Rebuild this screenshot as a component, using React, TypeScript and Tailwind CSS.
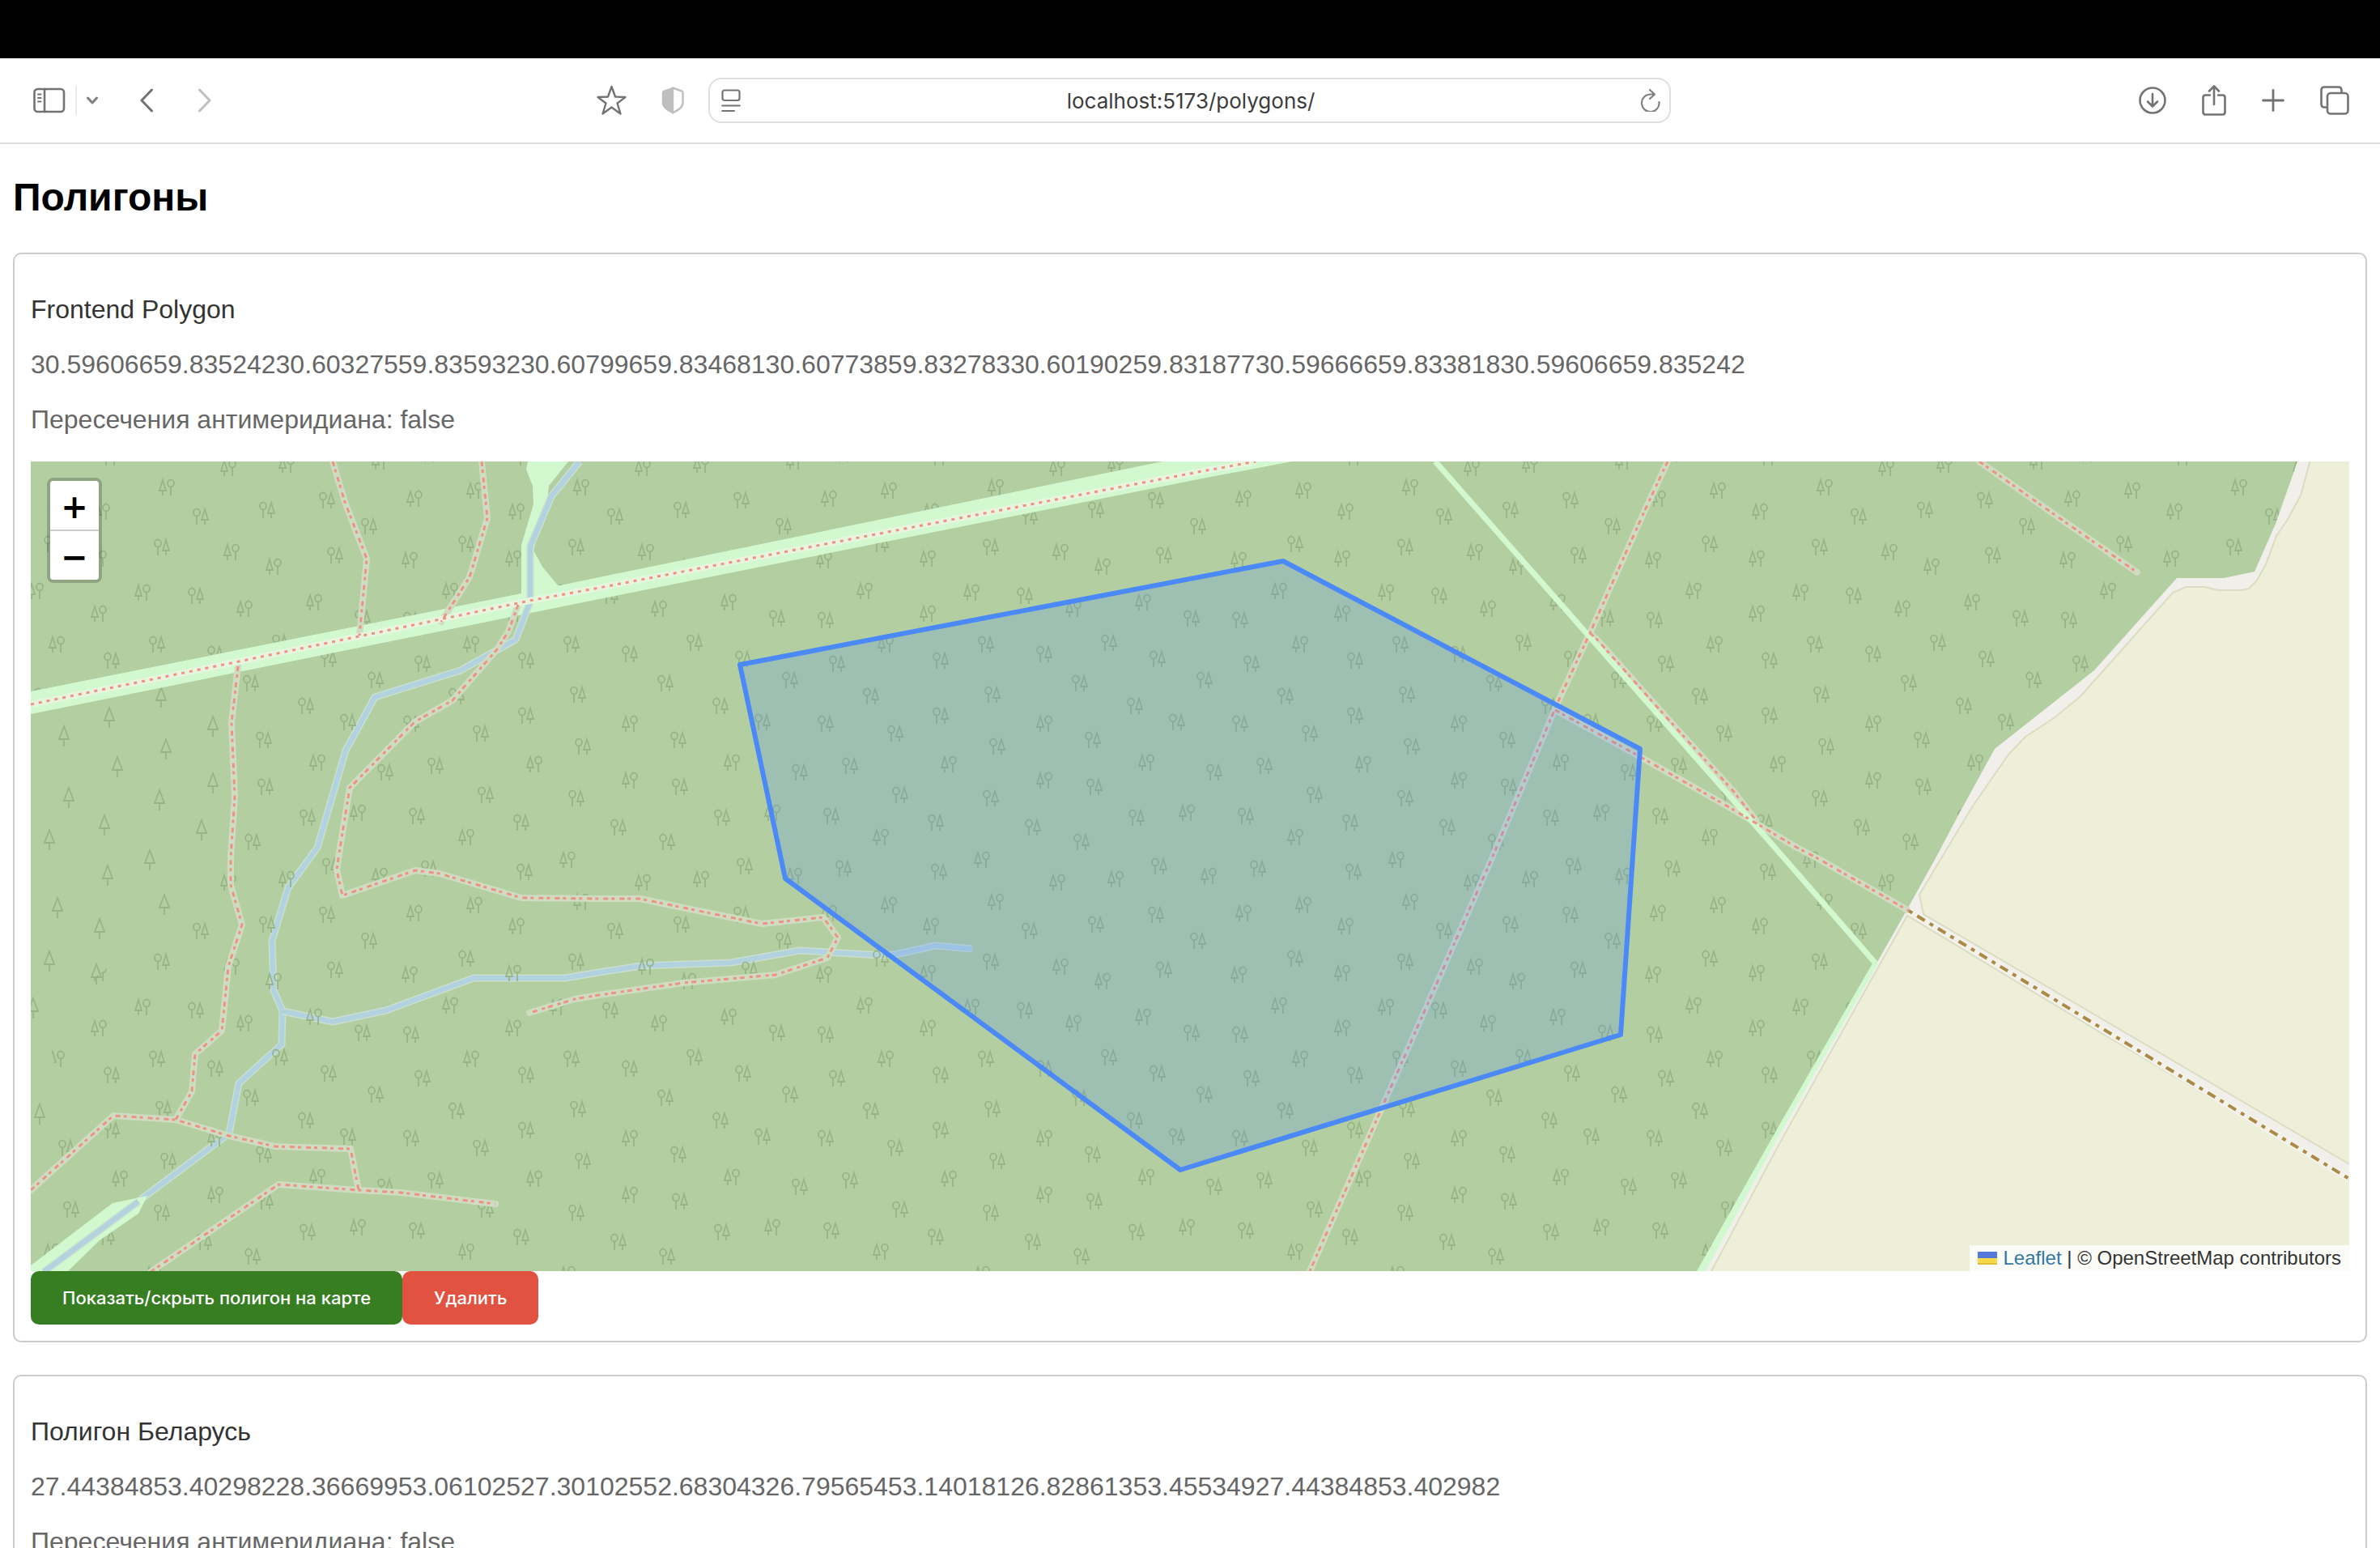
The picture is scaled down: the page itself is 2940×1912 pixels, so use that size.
import React from "react";

type Tree = [kind: "a" | "b", x: number, y: number];

const FOREST = "#b3cfa2";
const MEADOW = "#d1f8cf";
const TREE = "#98b587";

/* One 512-pixel tile of the mixed forest fill. */
const trees: Tree[] = [
  ["b", 54, 8], ["b", 126, 4], ["b", 241, 0], ["a", 302, 503], ["a", 420, 507],
  ["a", 20, 68], ["a", 102, 60], ["a", 176, 48], ["b", 284, 46], ["b", 358, 36],
  ["b", 490, 32], ["b", 410, 62], ["a", 228, 80], ["a", 348, 102], ["b", 58, 112],
  ["a", 484, 106], ["b", 110, 130], ["a", 186, 116], ["b", 278, 122], ["b", 406, 120],
  ["b", 460, 162], ["a", 14, 166], ["b", 74, 182], ["b", 160, 174], ["a", 220, 194],
  ["b", 328, 160], ["a", 280, 196], ["b", 406, 188], ["b", 354, 226], ["a", 118, 224],
  ["a", 38, 238], ["a", 478, 226], ["a", 178, 244], ["a", 294, 250], ["a", 422, 246],
  ["a", 82, 274], ["a", 236, 270], ["a", 336, 290], ["a", 486, 288], ["a", 150, 302],
  ["a", 202, 322], ["a", 280, 324], ["a", 422, 314], ["b", 38, 324], ["a", 366, 336],
  ["a", 98, 344], ["a", 492, 352], ["b", 164, 372], ["a", 248, 384], ["a", 310, 376],
  ["b", 432, 374], ["b", 38, 394], ["a", 100, 402], ["a", 372, 412], ["a", 484, 416],
  ["a", 152, 440], ["b", 214, 434], ["a", 287, 438], ["a", 416, 446], ["a", 24, 452],
  ["a", 84, 470], ["b", 348, 464], ["b", 473, 492], ["a", 180, 500],
];

const wrapped: Tree[] = trees.flatMap(([k, x, y]) => {
  const ys = y < 12 ? [y, y + 512] : y > 500 ? [y, y - 512] : [y];
  const xs = x < 12 ? [x, x + 512] : x > 500 ? [x, x - 512] : [x];
  return xs.flatMap((px) => ys.map((py): Tree => [k, px, py]));
});

const conifers: [number, number][] = [
  [199, 861], [135, 886], [79, 909], [205, 925], [145, 947], [263, 897], [263, 967],
  [85, 985], [197, 988], [129, 1019], [249, 1025], [61, 1037], [185, 1062], [133, 1081],
  [71, 1121], [203, 1117], [123, 1147], [61, 1187], [41, 1245], [49, 1376], [119, 1203],
];

const footpaths = [
  "M411 570 426 620 453 690 444 785",
  "M595 570 602 640 580 713 552 757 545 768",
  "M640 747 628 780 614 802 559 865 512 892 432 973 418 1060 416 1075 423 1106 513 1075 543 1079 644 1109 740 1110 790 1110 941 1141 1017 1133 1035 1158 1022 1183 958 1204 844 1214 740 1229 710 1234 654 1251",
  "M294 823 286 893 290 983 285 1060 285 1093 299 1142 282 1194 274 1273 241 1302 237 1348 217 1383",
  "M38 1470 140 1378 217 1383 283 1403 340 1416 433 1419 443 1470",
  "M186 1571 344 1463 443 1470 495 1473 612 1487",
  "M2060 570 2032 630 1964 782 1924 868 1843 1060 1618 1570",
  "M1964 782 1973 790 2046 872 2141 977 2169 1013",
  "M1921 877 2023 933 2136 997 2220 1047 2245 1060 2358 1125",
  "M2445 570 2530 630 2640 707",
];

const river =
  "M716 570 681 613 655 675 655 743 637 790 569 828 463 861 427 927 392 1047 356 1096 336 1162 338 1223 349 1249 348 1290 295 1338 283 1400 54 1571";
const stream =
  "M349 1249 411 1262 477 1248 585 1208 698 1208 740 1201 792 1193 903 1189 988 1174 1089 1180 1106 1179 1155 1168 1201 1172";

function River({ d }: { d: string }) {
  return (
    <g fill="none" strokeLinejoin="round">
      <path d={d} stroke="#c9dfd0" strokeWidth="9" />
      <path d={d} stroke="#b1d2de" strokeWidth="6" />
    </g>
  );
}

function ForestMap() {
  return (
    <svg
      className="block h-[1000px] w-full"
      viewBox="38 570 2864 1000"
      preserveAspectRatio="xMidYMid slice"
      role="img"
      aria-label="Карта полигона"
    >
      <defs>
        <g id="tree-a" fill="none" stroke={TREE} strokeWidth="1.8">
          <ellipse cx="-5" cy="-5" rx="4" ry="4.5" />
          <path d="M-5 0V10M5-9 1 4H9ZM5 4V10" />
        </g>
        <g id="tree-b" fill="none" stroke={TREE} strokeWidth="1.8">
          <ellipse cx="5" cy="-5" rx="4" ry="4.5" />
          <path d="M5 0V10M-5-9-9 4H-1ZM-5 4V10" />
        </g>
        <path id="conifer" d="M0-12-6 4H6ZM0 4V13" fill="none" stroke={TREE} strokeWidth="1.8" />
        <pattern id="wood" x="740" y="570" width="512" height="512" patternUnits="userSpaceOnUse">
          {wrapped.map(([k, x, y], i) => (
            <use key={i} href={k === "a" ? "#tree-a" : "#tree-b"} x={x} y={y} />
          ))}
        </pattern>
      </defs>

      <rect x="38" y="570" width="2864" height="1000" fill={FOREST} />
      <path
        d="M38 860 280 820 302 870 309 950 304 980 283 1055 245 1110 189 1152 94 1225 64 1260 64 1300 76 1350 75 1400 38 1406Z"
        fill={FOREST}
      />
      <River d={river} />
      <River d={stream} />
      <rect x="38" y="570" width="2864" height="1000" fill="url(#wood)" />

      <path
        d="M38 860 280 820 302 870 309 950 304 980 283 1055 245 1110 189 1152 94 1225 64 1260 64 1300 76 1350 75 1400 38 1406Z"
        fill={FOREST}
      />
      {conifers.map(([x, y]) => (
        <use key={`${x}-${y}`} href="#conifer" x={x} y={y} />
      ))}

      <path d="M652 570 650 580 658 600 659 623 644 673V740L690 724 670 700 659 680 676 617 678 600 702 570Z" fill={MEADOW} />
      <path d="M38 1563 139 1486 182 1477 171 1499 123 1532 83 1571H38Z" fill={MEADOW} />
      <path d="M38 854 644 733 740 713 1436 570H1596L1480 592 740 740 38 882Z" fill={MEADOW} />
      <River d="M716 570 681 613 655 675 655 743 637 790" />
      <River d="M171 1484 54 1571" />

      {/* Open land and the two fields east of the forest edge */}
      <path
        d="M2838 570 2811 647 2785 706 2747 714H2689L2587 828 2464 925 2419 1007 2391 1060 2356 1123 2318 1190 2098 1570H2902V570Z"
        fill="#f0efea"
      />
      <path
        d="M2854 568 2842 612 2825 643 2812 662 2799 697 2788 717 2778 727 2769 729H2740L2724 725H2700L2684 732 2570 860 2537 887 2502 910 2481 932 2436 997 2398 1060 2371 1105 2376 1129 2904 1439V568Z"
        fill="#edefd8"
        stroke="#dadcc3"
        strokeWidth="2"
      />
      <path
        d="M2356 1131 2200 1409 2113 1572H2904V1459L2601 1279Z"
        fill="#edefd8"
        stroke="#dadcc3"
        strokeWidth="2"
      />
      <path d="M2313 1190 2200 1386 2096 1570H2107L2200 1398 2320 1190Z" fill={MEADOW} />

      <g fill="none" stroke="#d0dcc2" strokeWidth="8" strokeLinecap="round" strokeLinejoin="round">
        {footpaths.map((d) => (
          <path key={d} d={d} />
        ))}
      </g>
      <path d="M1773 570 1964 787 2154 1003 2204 1060 2317 1190" fill="none" stroke={MEADOW} strokeWidth="7" />
      <path d="M38 870 295 817 654 742 740 726 1480 583 1551 570" fill="none" stroke="#e8f5de" strokeWidth="8" />
      <g fill="none" stroke="#ec9384" strokeWidth="3">
        <path d="M38 870 295 817 654 742 740 726 1480 583 1551 570" strokeDasharray="4 6" />
        {footpaths.map((d) => (
          <path key={d} d={d} strokeDasharray="6 4 4 6" />
        ))}
      </g>
      <path d="M2358 1125 2902 1456" stroke="#f4f1ea" strokeWidth="9" />
      <path d="M2358 1125 2902 1456" stroke="#a98b45" strokeWidth="4" strokeDasharray="5 7 11 7" />

      <path
        d="M914 821 1585 693 2026 925 2002 1278 1458 1445 970 1085Z"
        fill="#4b88f8"
        fillOpacity="0.2"
        stroke="#4b88f8"
        strokeWidth="6"
        strokeLinejoin="round"
      />
    </svg>
  );
}

function MapView() {
  return (
    <div className="relative">
      <ForestMap />
      <div className="absolute left-5 top-5 flex w-[68px] flex-col overflow-hidden rounded-lg border-4 border-black/20 bg-clip-padding font-['DejaVu_Sans',sans-serif] text-[40px] font-bold leading-none text-black">
        <button type="button" aria-label="Приблизить" className="flex h-[62px] items-center justify-center border-b-2 border-[#ccc] bg-white pt-1">
          +
        </button>
        <button type="button" aria-label="Отдалить" className="flex h-[60px] items-center justify-center bg-white pt-1">
          −
        </button>
      </div>
      <div className="absolute bottom-0 right-0 flex h-8 items-center bg-white/80 px-[10px] text-[24px] leading-8 text-[#333]">
        <svg viewBox="0 0 24 16" className="mr-2 h-4 w-6" aria-hidden="true">
          <path fill="#5679dc" d="M0 0h24v8H0z" />
          <path fill="#fbd949" d="M0 8h24v6H0z" />
          <path fill="#e3bd3c" d="M0 14h24v2H0z" />
        </svg>
        <a href="#leaflet" className="text-[#3277a4]">Leaflet</a>
        <span className="whitespace-pre"> | © OpenStreetMap contributors</span>
      </div>
    </div>
  );
}

interface PolygonCardProps {
  name: string;
  coordinates: string;
  showMap?: boolean;
}

function PolygonCard({ name, coordinates, showMap = false }: PolygonCardProps) {
  return (
    <article className="rounded-[10px] border-2 border-[#ccc] px-5 pb-5 pt-[50px] text-[32px] leading-9 text-[#666]">
      <div className="mb-[34px] flex flex-col gap-8">
        <p className="text-[#333]">{name}</p>
        <p>{coordinates}</p>
        <p>Пересечения антимеридиана: false</p>
      </div>
      {showMap && <MapView />}
      <div className="flex font-['Inter',sans-serif] text-[22px] font-medium leading-[26px] text-white">
        <button type="button" className="rounded-[10px] bg-[#377e22] px-[39px] py-5">
          Показать/скрыть полигон на карте
        </button>
        <button type="button" className="rounded-[10px] bg-[#e15241] px-[39px] py-5">
          Удалить
        </button>
      </div>
    </article>
  );
}

interface IconProps {
  w: number;
  h: number;
  label: string;
  className?: string;
  children: React.ReactNode;
}

function IconButton({ w, h, label, className = "text-[#737373]", children }: IconProps) {
  return (
    <button type="button" aria-label={label} className={className}>
      <svg
        width={w}
        height={h}
        viewBox={`0 0 ${w} ${h}`}
        fill="none"
        stroke="currentColor"
        strokeWidth="2.6"
        strokeLinecap="round"
        strokeLinejoin="round"
      >
        {children}
      </svg>
    </button>
  );
}

function Toolbar() {
  return (
    <header className="grid shrink-0 grid-cols-[875fr_1189fr_876fr] items-center border-b-2 border-[#dcdcdc] bg-white py-6">
      <div className="flex items-center justify-between pl-[41px] pr-[30px]">
        <div className="flex items-center gap-[52px]">
          <div className="flex items-center gap-3">
            <IconButton w={40} h={32} label="Боковая панель">
              <rect x="1.5" y="2" width="36.5" height="28" rx="4" />
              <path d="M14 2V30" />
              <path d="M6 8.500H9.500M6 13H9.500M6 17.500H9.500" strokeWidth="2" />
            </IconButton>
            <span className="h-9 w-[2px] bg-[#ececec]" />
            <IconButton w={14} h={10} label="Группы вкладок" className="text-[#808080]">
              <path d="M1.500 2 7 8 12.500 2" strokeWidth="3" />
            </IconButton>
          </div>
          <div className="flex items-center gap-14">
            <IconButton w={16} h={30} label="Назад">
              <path d="M14.500 2 2 15 14.500 28" strokeWidth="3" />
            </IconButton>
            <IconButton w={16} h={30} label="Вперёд" className="text-[#bfbfbf]">
              <path d="M1.500 2 14 15 1.500 28" strokeWidth="3" />
            </IconButton>
          </div>
        </div>
        <div className="flex items-center gap-[43px]">
          <IconButton w={37} h={38} label="Избранное">
            <path d="M18.500 2 23 14.500 35.500 15 25.500 22.500 29.500 35.500 18.500 27.500 7.500 35.500 11.500 22.500 1.500 15 14 14.500Z" strokeWidth="2.400" />
          </IconButton>
          <IconButton w={28} h={34} label="Отчёт о конфиденциальности" className="text-[#bfbfbf]">
            <path d="M14 1.500 2.800 5.500Q1.500 6 1.500 7.500V20C1.500 26 8 29.500 14 32.500Z" fill="currentColor" strokeWidth="1.500" />
            <path d="M14 1.500 25 5.500Q26.500 6 26.500 7.500V20C26.500 26 20 29.500 14 32.500Z" strokeWidth="2.400" />
          </IconButton>
        </div>
      </div>

      <div className="flex h-14 items-center rounded-2xl border-2 border-[#dfdfdf] pl-[14px] pr-[11px]">
        <IconButton w={24} h={28} label="Режим чтения">
          <rect x="1.500" y="1.500" width="21" height="12.500" rx="2.500" strokeWidth="2.200" />
          <path d="M1.200 20.500H22.800M1.200 27H16" strokeWidth="2" />
        </IconButton>
        <input
          aria-label="Адрес"
          defaultValue="localhost:5173/polygons/"
          className="min-w-0 flex-1 bg-transparent pt-[2px] text-center font-['Inter',sans-serif] text-[26px] leading-8 text-[#3c3c3c] outline-none"
        />
        <IconButton w={24} h={28} label="Обновить" className="text-[#808080]">
          <path d="M22.500 16A10.800 10.800 0 1 1 11.700 6.500H16.500M11 1 17 6.500 11 12" strokeWidth="2.200" />
        </IconButton>
      </div>

      <div className="flex items-center justify-end gap-11 pr-[38px]">
        <IconButton w={34} h={34} label="Загрузки">
          <circle cx="17" cy="17" r="15.500" />
          <path d="M17 9V24.500M11 18.500 17 24.500 23 18.500" />
        </IconButton>
        <IconButton w={30} h={38} label="Поделиться">
          <path d="M10 12.500H4.500Q1.500 12.500 1.500 15.500V33.500Q1.500 36.500 4.500 36.500H25.500Q28.500 36.500 28.500 33.500V15.500Q28.500 12.500 25.500 12.500H20" />
          <path d="M15 24V2M9 7.500 15 1.500 21 7.500" />
        </IconButton>
        <IconButton w={28} h={28} label="Новая вкладка">
          <path d="M14 1.500V26.500M1.500 14H26.500" strokeWidth="2.800" />
        </IconButton>
        <IconButton w={36} h={36} label="Обзор вкладок">
          <path d="M8 26.500H5.500Q1.500 26.500 1.500 22.500V5.500Q1.500 1.500 5.500 1.500H22.500Q26.500 1.500 26.500 5.500V8.500" />
          <rect x="9" y="9" width="25.500" height="25.500" rx="4" />
        </IconButton>
      </div>
    </header>
  );
}

export default function App() {
  return (
    <div className="flex h-screen flex-col overflow-hidden bg-white font-['Liberation_Sans',Arial,sans-serif]">
      <div className="h-[72px] shrink-0 bg-black" />
      <Toolbar />
      <main className="min-h-0 flex-1 overflow-hidden px-4 pt-[38px]">
        <h1 className="mb-10 text-[48px] font-bold leading-[56px] text-black">Полигоны</h1>
        <div className="flex flex-col gap-10">
          <PolygonCard
            name="Frontend Polygon"
            coordinates="30.59606659.83524230.60327559.83593230.60799659.83468130.60773859.83278330.60190259.83187730.59666659.83381830.59606659.835242"
            showMap
          />
          <PolygonCard
            name="Полигон Беларусь"
            coordinates="27.44384853.40298228.36669953.06102527.30102552.68304326.79565453.14018126.82861353.45534927.44384853.402982"
          />
        </div>
      </main>
    </div>
  );
}
